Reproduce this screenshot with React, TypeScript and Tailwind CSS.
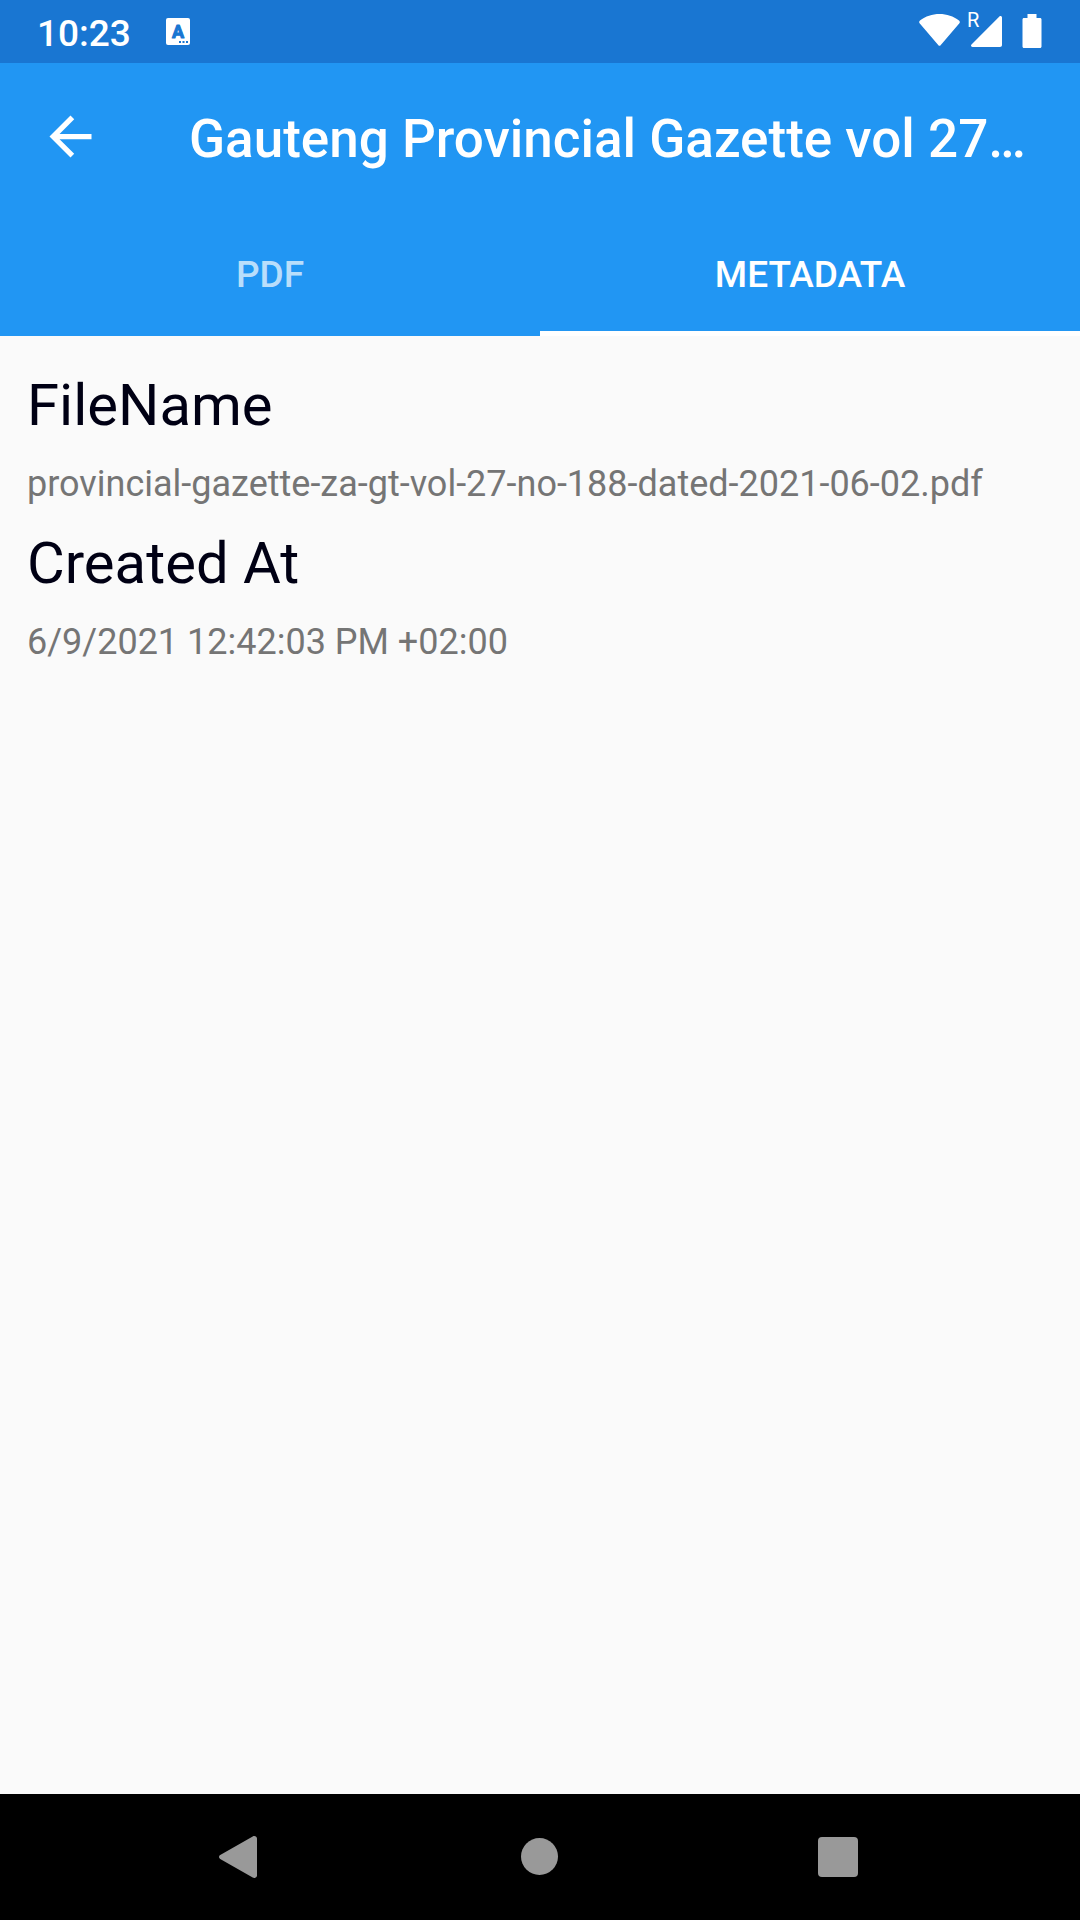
import { useState } from "react";

const TABS = ["PDF", "METADATA"];

const METADATA = [
  { label: "FileName", value: "provincial-gazette-za-gt-vol-27-no-188-dated-2021-06-02.pdf" },
  { label: "Created At", value: "6/9/2021 12:42:03 PM +02:00" },
];

function StatusBar() {
  return (
    <div className="flex h-[63px] items-center justify-between bg-[#1976d2] pr-[38px] pl-[37px] text-white">
      <div className="flex items-center gap-[35px]">
        <time className="pt-1 text-[37px] leading-[44px] font-medium">10:23</time>
        <svg width="24" height="27" viewBox="0 0 24 27" aria-hidden="true">
          <rect width="24" height="27" rx="2" fill="#fff" />
          <text x="12" y="19.500" textAnchor="middle" fontSize="18" fontWeight="700" fill="#1976d2" stroke="#1976d2" strokeWidth="1" strokeLinejoin="round">
            A
          </text>
          <path d="M13 23h2v2h-2zM16.500 23h2v2h-2zM20 23h2v2h-2z" fill="#1976d2" />
        </svg>
      </div>
      <div className="flex h-full items-start pt-[13px]">
        <svg width="41" height="34" viewBox="0 0 41 34" fill="#fff" aria-label="Wi-Fi">
          <path d="M.6 10.200C-.1 9.300.1 8 1 7.400 6.500 3.400 13.200 1 20.500 1S34.500 3.400 40 7.400c.9.600 1.100 1.900.4 2.800L21.600 32.200c-.6.700-1.600.7-2.200 0z" />
        </svg>
        <div className="relative ml-[11px]">
          <svg width="31" height="34" viewBox="0 0 31 34" fill="#fff" aria-label="Mobile signal">
            <path d="M28.400 3.500c1-1 2.600-.4 2.600 1V32c0 1.200-.8 2-2 2H1.500c-1.400 0-2-1.600-1-2.600z" />
          </svg>
          <span className="absolute -top-1 -left-1 text-[20px] leading-[22px]">R</span>
        </div>
        <svg className="ml-5" width="20" height="35" viewBox="0 0 20 35" fill="#fff" aria-label="Battery">
          <path d="M5.500 1h9v4H18c1 0 1.500.6 1.500 1.500v27c0 .9-.6 1.500-1.500 1.500H2c-.9 0-1.500-.6-1.500-1.500v-27C.5 5.600 1 5 2 5h3.500z" />
        </svg>
      </div>
    </div>
  );
}

function Header({ active, onSelect }: { active: string; onSelect: (tab: string) => void }) {
  return (
    <header className="bg-[#2196f3] text-white">
      <div className="flex h-[147px] items-center gap-[87px] pr-[42px] pl-[39px]">
        <button type="button" aria-label="Back" className="shrink-0">
          <svg width="63" height="63" viewBox="0 0 24 24" fill="currentColor">
            <path d="M20 11H7.830l5.590-5.590L12 4l-8 8 8 8 1.410-1.410L7.830 13H20z" />
          </svg>
        </button>
        <h1 className="min-w-0 truncate pt-1 text-[53px] leading-[62px] font-medium">
          Gauteng Provincial Gazette vol 27…
        </h1>
      </div>
      <div role="tablist" className="grid grid-cols-2">
        {TABS.map((tab) => (
          <button
            key={tab}
            type="button"
            role="tab"
            aria-selected={tab === active}
            onClick={() => onSelect(tab)}
            className={
              tab === active
                ? "h-[126px] border-b-5 border-b-white pt-2 text-[37px] leading-[44px] font-medium text-white"
                : "h-[126px] border-b-5 border-b-transparent pt-2 text-[37px] leading-[44px] font-medium text-white/70"
            }
          >
            {tab}
          </button>
        ))}
      </div>
    </header>
  );
}

function NavigationBar() {
  return (
    <nav className="grid h-[126px] grid-cols-3 bg-black px-[90px] text-[#999999]">
      <button type="button" aria-label="Back" className="flex items-center justify-center">
        <svg width="42" height="42" viewBox="0 0 42 42" fill="currentColor">
          <path d="M1.200 19.100 33.700.5C35.500-.5 38 .4 38 2.500v37c0 2.100-2.500 3-4.300 2L1.200 22.900c-1.600-.9-1.600-2.900 0-3.800z" />
        </svg>
      </button>
      <button type="button" aria-label="Home" className="flex items-center justify-center">
        <svg width="38" height="38" viewBox="0 0 38 38" fill="currentColor">
          <circle cx="18.500" cy="18.500" r="18.500" />
        </svg>
      </button>
      <button type="button" aria-label="Overview" className="flex items-center justify-center">
        <svg width="44" height="40" viewBox="0 0 44 40" fill="currentColor">
          <rect width="40" height="40" rx="4" />
        </svg>
      </button>
    </nav>
  );
}

export default function App() {
  const [active, setActive] = useState("METADATA");

  return (
    <div className="flex min-h-screen flex-col bg-[#fafafa] font-[Roboto,sans-serif]">
      <StatusBar />
      <Header active={active} onSelect={setActive} />
      <main className="flex-1 px-[27px] pt-[35px]">
        {active === "METADATA" && (
          <dl className="flex flex-col gap-6">
            {METADATA.map(({ label, value }) => (
              <div key={label} className="flex flex-col gap-6">
                <dt className="text-[58px] leading-[68px] text-[#000014]">{label}</dt>
                <dd className="text-[36px] leading-[42px] wrap-anywhere text-[#757575]">{value}</dd>
              </div>
            ))}
          </dl>
        )}
      </main>
      <NavigationBar />
    </div>
  );
}
